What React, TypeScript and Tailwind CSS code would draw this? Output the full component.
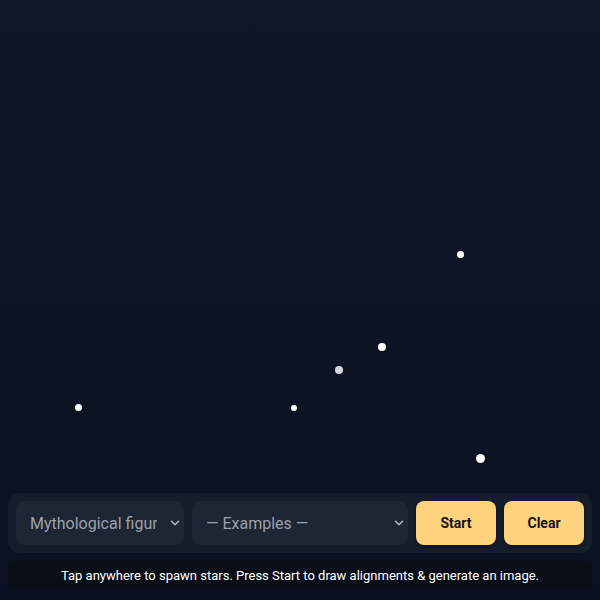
import { ChevronDown } from "lucide-react";

type Star = { x: number; y: number; r: number; dim?: boolean };

// stars already placed on the sky canvas
const stars: Star[] = [
  { x: 460, y: 254, r: 3.5 },
  { x: 382, y: 347, r: 4 },
  { x: 339, y: 370, r: 4, dim: true },
  { x: 294, y: 408, r: 3 },
  { x: 78, y: 407, r: 3.5 },
  { x: 480, y: 458, r: 4.5 },
];

function SelectBox({ value, className }: { value: string; className: string }) {
  return (
    <div className={`relative h-11 ${className}`}>
      <select
        defaultValue={value}
        className="h-full w-full appearance-none overflow-hidden whitespace-nowrap rounded-lg bg-[#1e2533] pl-[14px] pr-[27px] pt-px text-[16px] text-[#9aa1ae] outline-none [text-overflow:clip]"
      >
        <option>{value}</option>
      </select>
      <ChevronDown
        size={14}
        strokeWidth={2.75}
        className="pointer-events-none absolute right-[2px] top-1/2 -translate-y-1/2 text-[#aab1bd]"
      />
    </div>
  );
}

export default function App() {
  return (
    <div
      className="flex h-[600px] w-[600px] flex-col bg-gradient-to-b from-[#101727] to-[#0b1120]"
      style={{ fontFamily: "Roboto, 'Liberation Sans', sans-serif" }}
    >
      <div className="relative flex-1">
        {stars.map((s, i) => (
          <span
            key={i}
            className={`absolute rounded-full ${s.dim ? "bg-[#d4d7dd]" : "bg-white"}`}
            style={{
              left: s.x - s.r,
              top: s.y - s.r,
              width: s.r * 2,
              height: s.r * 2,
            }}
          />
        ))}
      </div>

      <div className="mx-2 flex gap-2 rounded-xl bg-[#151c2a] p-2">
        <SelectBox value="Mythological figure" className="w-[168px]" />
        <SelectBox value="— Examples —" className="w-[216px]" />
        <button className="h-11 w-20 rounded-lg bg-[#fdd37e] text-[14px] font-bold text-[#111318] shadow-[0_2px_3px_rgba(0,0,0,0.35)]">
          Start
        </button>
        <button className="h-11 w-20 rounded-lg bg-[#fdd37e] text-[14px] font-bold text-[#111318] shadow-[0_2px_3px_rgba(0,0,0,0.35)]">
          Clear
        </button>
      </div>

      <div className="mx-2 mb-[10px] mt-2 flex h-[29px] items-center justify-center rounded-lg bg-[#0a0f1a] text-[13px] text-white">
        Tap anywhere to spawn stars. Press Start to draw alignments &amp; generate an image.
      </div>
    </div>
  );
}
